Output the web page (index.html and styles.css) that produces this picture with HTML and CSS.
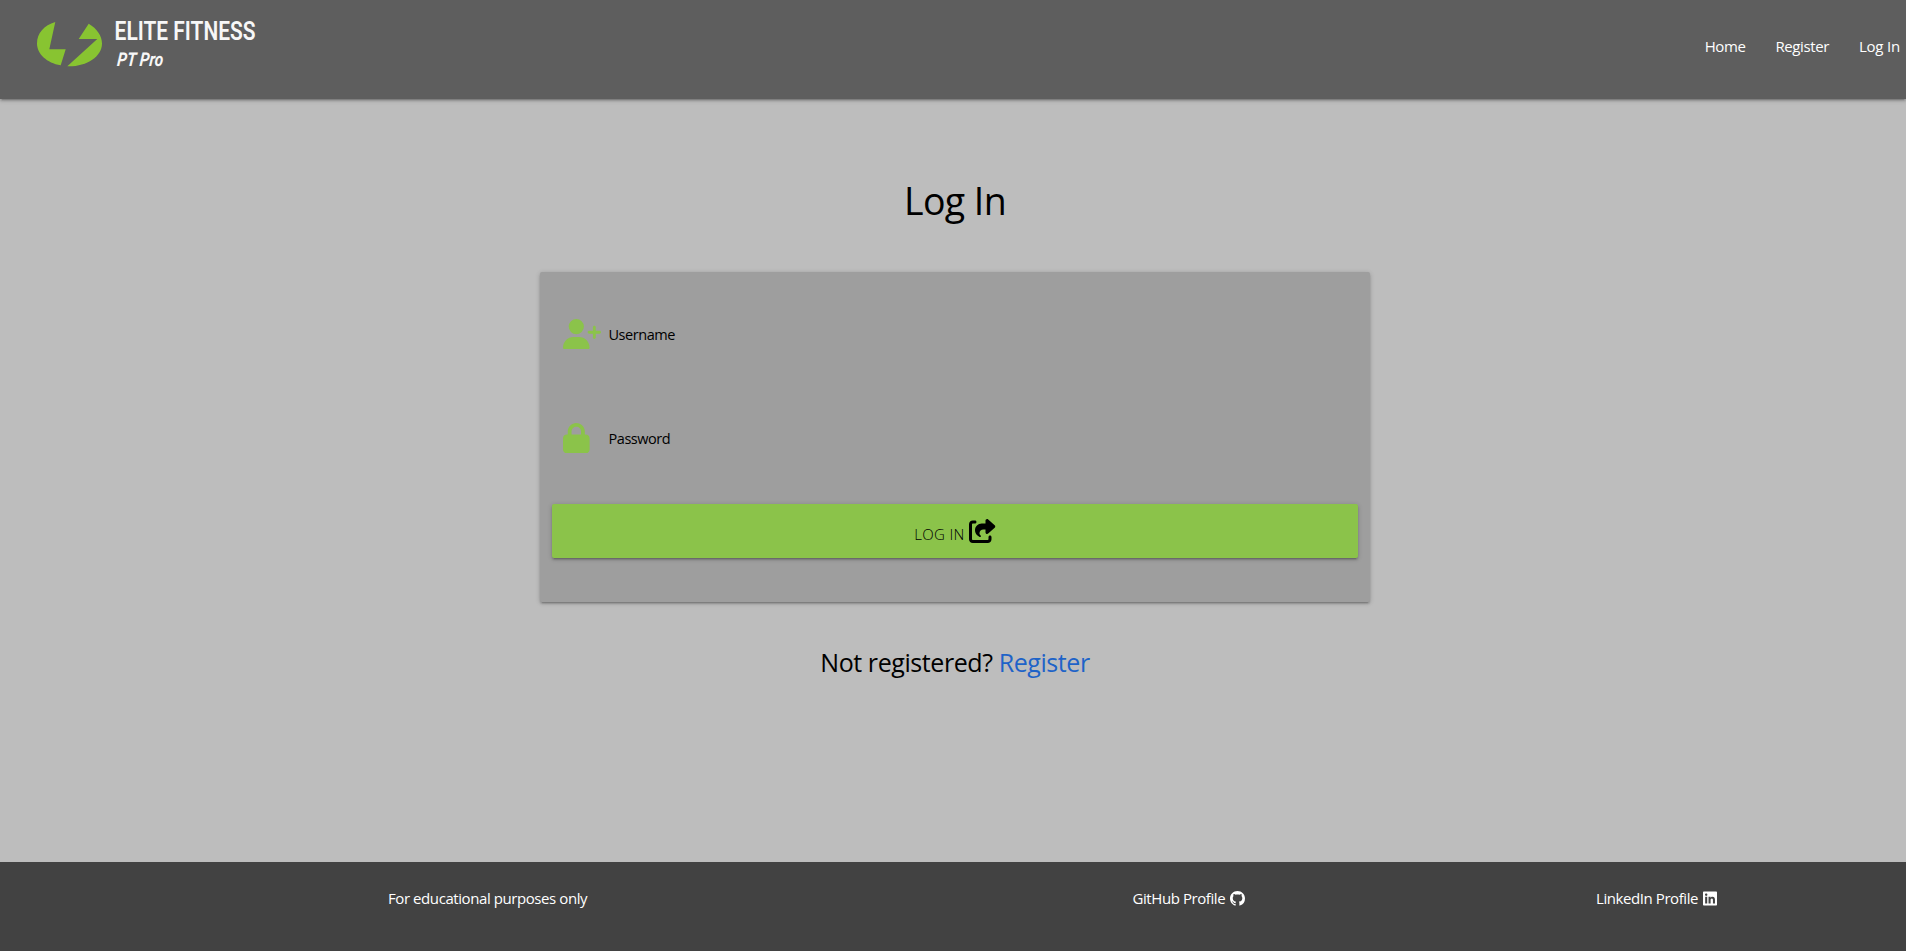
FILE: index.html
```html
<!DOCTYPE html>
<html lang="en">
<head>
<meta charset="utf-8">
<title>Elite Fitness PT Pro - Log In</title>
<link rel="stylesheet" href="styles.css">
</head>
<body>
<header class="navbar">
  <a class="brand" href="#">
    <svg width="260" height="70" viewBox="30 12 260 70" role="img" aria-label="Elite Fitness PT Pro">
      <g fill="#88c431">
        <path d="M55.3 22 49.3 49.3H65.7L60.7 65.3C47 63 37 54 37 43.5C37 33.5 44 25 55.3 22Z"/>
        <path d="M88.7 23.7 78.7 39H97.3L67.3 66.3C86 67 102 57 102 43.5C102 36 97 28.5 88.7 23.7Z"/>
      </g>
      <g class="brand-text">
        <text transform="translate(114.6 40.3) scale(.79 1)" font-size="26.5" font-weight="600">ELITE FITNESS</text>
        <text transform="translate(116.8 65.8) skewX(-5) scale(.82 1)" font-size="19" font-weight="700" font-style="italic">PT Pro</text>
      </g>
    </svg>
  </a>
  <nav class="nav-links">
    <a href="#">Home</a>
    <a href="#">Register</a>
    <a href="#">Log In</a>
  </nav>
</header>
<main class="content">
  <h1 class="title">Log In</h1>
  <form class="card">
    <label class="field">
      <svg class="field-icon" viewBox="0 0 640 512"><path d="M96 128a128 128 0 1 1 256 0A128 128 0 1 1 96 128zM0 482.3C0 383.8 79.8 304 178.3 304h91.4C368.2 304 448 383.8 448 482.3c0 16.4-13.3 29.7-29.7 29.7H29.7C13.3 512 0 498.7 0 482.3zM504 312V248H440c-13.3 0-24-10.7-24-24s10.7-24 24-24h64V136c0-13.3 10.7-24 24-24s24 10.7 24 24v64h64c13.3 0 24 10.7 24 24s-10.7 24-24 24H552v64c0 13.3-10.7 24-24 24s-24-10.7-24-24z"/></svg>
      <span>Username</span>
    </label>
    <label class="field">
      <svg class="field-icon" viewBox="0 0 640 512"><path d="M144 144v48H304V144c0-44.2-35.8-80-80-80s-80 35.8-80 80zM80 192V144C80 64.5 144.5 0 224 0s144 64.5 144 144v48h16c35.3 0 64 28.7 64 64V448c0 35.3-28.7 64-64 64H64c-35.3 0-64-28.7-64-64V256c0-35.3 28.7-64 64-64H80z"/></svg>
      <span>Password</span>
    </label>
    <button class="submit" type="button">
      <span>LOG IN</span>
      <svg class="submit-icon" viewBox="0 0 576 512"><path d="M352 224H305.5c-45 0-81.5 36.5-81.5 81.5c0 22.3 10.3 34.3 19.2 40.5c6.8 4.7 12.8 12 12.8 20.3c0 9.8-8 17.8-17.8 17.8h-2.5c-2.4 0-4.8-.4-7.1-1.4C210.8 374.8 128 333.4 128 240c0-79.5 64.5-144 144-144h80V34.7C352 15.5 367.5 0 386.7 0c8.6 0 16.8 3.2 23.2 8.9L548.1 133.3c7.6 6.8 11.9 16.5 11.9 26.7s-4.3 19.9-11.9 26.7l-139 125.1c-5.9 5.3-13.5 8.2-21.4 8.2H384c-17.7 0-32-14.3-32-32V224zM80 96c-8.8 0-16 7.2-16 16V432c0 8.8 7.2 16 16 16H400c8.8 0 16-7.2 16-16V384c0-17.7 14.3-32 32-32s32 14.3 32 32v48c0 44.2-35.8 80-80 80H80c-44.2 0-80-35.8-80-80V112C0 67.8 35.8 32 80 32h48c17.7 0 32 14.3 32 32s-14.3 32-32 32H80z"/></svg>
    </button>
  </form>
  <p class="signup">Not registered? <a href="#">Register</a></p>
</main>
<footer class="footer">
  <div class="note">For educational purposes only</div>
  <a class="github" href="#"><span>GitHub Profile</span>
    <svg width="15" height="15" viewBox="0 0 16 16"><path d="M8 0C3.58 0 0 3.58 0 8c0 3.54 2.29 6.53 5.47 7.59.4.07.55-.17.55-.38 0-.19-.01-.82-.01-1.49-2.01.37-2.53-.49-2.69-.94-.09-.23-.48-.94-.82-1.13-.28-.15-.68-.52-.01-.53.63-.01 1.08.58 1.23.82.72 1.21 1.87.87 2.33.66.07-.52.28-.87.51-1.07-1.78-.2-3.64-.89-3.64-3.95 0-.87.31-1.59.82-2.15-.08-.2-.36-1.02.08-2.12 0 0 .67-.21 2.2.82.64-.18 1.32-.27 2-.27s1.36.09 2 .27c1.53-1.04 2.2-.82 2.2-.82.44 1.1.16 1.92.08 2.12.51.56.82 1.27.82 2.15 0 3.07-1.87 3.75-3.65 3.95.29.25.54.73.54 1.48 0 1.07-.01 1.93-.01 2.2 0 .21.15.46.55.38A8.01 8.01 0 0 0 16 8c0-4.42-3.58-8-8-8z"/></svg></a>
  <a class="linkedin" href="#"><span>LinkedIn Profile</span>
    <svg width="14" height="15" viewBox="0 16 448 480"><path d="M416 32H31.9C14.3 32 0 46.5 0 64.3v383.4C0 465.5 14.3 480 31.9 480H416c17.6 0 32-14.5 32-32.3V64.3c0-17.8-14.4-32.3-32-32.3zM135.4 416H69V202.2h66.5V416zm-33.2-243c-21.3 0-38.5-17.3-38.5-38.5S80.9 96 102.2 96c21.2 0 38.5 17.3 38.5 38.5 0 21.3-17.2 38.5-38.5 38.5zm282.1 243h-66.4V312c0-24.8-.5-56.7-34.5-56.7-34.6 0-39.9 27-39.9 54.9V416h-66.4V202.2h63.7v29.2h.9c8.9-16.8 30.6-34.5 62.2-34.5 66.5 0 78.9 43.8 78.9 100.9V416z"/></svg></a>
</footer>
</body>
</html>
```

FILE: styles.css
```css
* { box-sizing: border-box; }
body {
  margin: 0;
  min-height: 951px;
  display: flex;
  flex-direction: column;
  background: #bdbdbd;
  color: #000;
  font: 15px/22px "Open Sans", "Noto Sans", sans-serif;
  letter-spacing: -0.42px;
}
a { color: inherit; text-decoration: none; }
.navbar {
  height: 99px;
  display: flex;
  justify-content: space-between;
  align-items: flex-start;
  padding: 12px 6px 0 30px;
  background: #5e5e5e;
  color: #fff;
  box-shadow: 0 2px 2px 0 rgba(0,0,0,.14), 0 3px 1px -2px rgba(0,0,0,.12), 0 1px 5px 0 rgba(0,0,0,.2);
}
.brand svg { display: block; }
.brand-text { fill: #f7f7f7; font-family: Roboto, sans-serif; letter-spacing: 0; }
.nav-links { display: flex; gap: 30px; padding-top: 23px; }
.nav-links a { letter-spacing: -0.4px; }
.nav-links a:last-child { letter-spacing: -0.2px; }
.content { flex: 1; display: flex; flex-direction: column; align-items: center; }
.title {
  margin: 76px 0 0 4px;
  font-size: 37.5px;
  line-height: 52px;
  font-weight: 400;
  letter-spacing: -0.6px;
}
.card {
  width: 830px;
  height: 330px;
  margin: 45px 0 0 4px;
  padding: 47px 12px 0;
  display: flex;
  flex-direction: column;
  background: #9e9e9e;
  border-radius: 2px;
  box-shadow: 0 2px 2px 0 rgba(0,0,0,.14), 0 3px 1px -2px rgba(0,0,0,.12), 0 1px 5px 0 rgba(0,0,0,.2);
}
.field {
  height: 30px;
  margin: 0 11px 84px;
  display: flex;
  gap: 7.5px;
  align-items: center;
  font-size: 14.5px;
  letter-spacing: -0.45px;
}
.field span { padding-top: 2px; }
.field + .field { margin: -10px 11px 51px; }
.field-icon { width: 38px; height: 30.4px; fill: #8bc34a; }
.submit {
  height: 54px;
  display: flex;
  justify-content: center;
  align-items: center;
  gap: 4px;
  padding: 6px 0 0;
  border: 0;
  border-radius: 2px;
  background: #8bc34a;
  color: #000;
  font: 300 15px/22px "Open Sans", "Noto Sans", sans-serif;
  letter-spacing: 0.3px;
  box-shadow: 0 2px 2px 0 rgba(0,0,0,.14), 0 3px 1px -2px rgba(0,0,0,.12), 0 1px 5px 0 rgba(0,0,0,.2);
}
.submit-icon { width: 27px; height: 24px; margin-top: -7px; }
.signup { margin: 42px 0 0 4px; font-size: 25px; line-height: 36px; font-weight: 400; letter-spacing: -0.42px; }
.signup a { color: #1e63c8; }
.footer {
  height: 89px;
  display: grid;
  grid-template-columns: 744.5px 463.5px 1fr;
  padding: 25px 0 0 388px;
  background: #424242;
  color: #fff;
}
.footer a { display: flex; gap: 5px; }
.footer svg { fill: #fff; margin-top: 4px; }
```
